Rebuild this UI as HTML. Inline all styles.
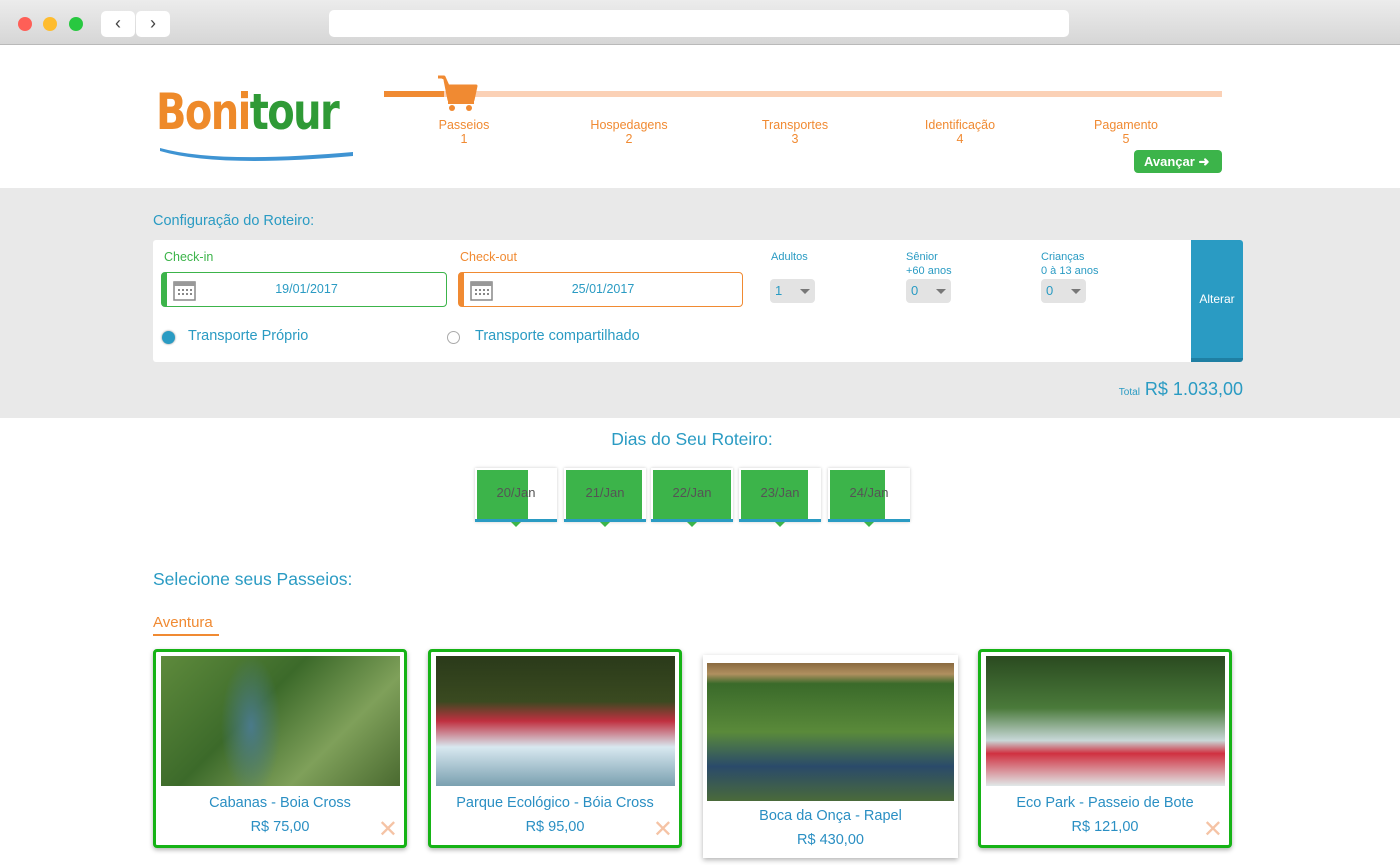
<!DOCTYPE html>
<html><head><meta charset="utf-8"><style>
*{box-sizing:border-box;margin:0;padding:0}
body{width:1400px;height:865px;overflow:hidden;font-family:"Liberation Sans",sans-serif;background:#fff;position:relative;color:#2a9bc3}
.a{position:absolute}
.chrome{left:0;top:0;width:1400px;height:45px;background:linear-gradient(#ececec,#d6d6d6);border-bottom:1px solid #b9b9b9}
.dot{width:14px;height:14px;border-radius:50%;top:17px}
.nb{top:11px;width:34px;height:26px;background:#fff;border-radius:5px;font-size:18px;color:#444;text-align:center;line-height:25px}
.step{width:120px;text-align:center;color:#f08a32;font-size:12.5px;line-height:14px;top:118px}
.gray{left:0;top:188px;width:1400px;height:230px;background:#e9e9e9}
.lbl{font-size:11px;color:#2a9bc3;line-height:14px}
.sel{width:45px;height:24px;background:#e3e3e3;border-radius:4px;font-size:13px;color:#2a9bc3;padding:4px 0 0 5px}
.sel:after{content:"";position:absolute;right:5px;top:10px;border:5px solid transparent;border-top:5px solid #777}
.day{top:468px;width:82px;height:54px;background:#fff;box-shadow:0 0 3px #ccc;border-bottom:3px solid #2a9bc3;font-size:13px;color:#555;text-align:center;line-height:50px}
.day i{position:absolute;left:2px;top:2px;height:49px;background:#3cb44a}
.day span{position:relative}
.day b{position:absolute;left:36px;top:54px;border:5px solid transparent;border-top:5px solid #3cb44a}
.card{top:649px;width:254px;height:199px;border:3px solid #16b316;border-radius:4px;box-shadow:0 2px 5px rgba(0,0,0,.3);background:#fff;text-align:center}
.card .img{position:absolute;left:5px;top:4px;width:239px;height:130px}
.card .t{position:absolute;left:0;width:100%;top:143px;font-size:14.5px;color:#2a8fc3}
.card .p{position:absolute;left:0;width:100%;top:167px;font-size:14.5px;color:#2a8fc3}
.x{position:absolute;right:6px;top:168px;font-size:24px;color:#f5c3a5;line-height:20px}
</style></head><body>
<div class="a chrome"></div>
<div class="a dot" style="left:18px;background:#fe5f57"></div>
<div class="a dot" style="left:43px;background:#febc2e"></div>
<div class="a dot" style="left:69px;background:#28c840"></div>
<div class="a nb" style="left:101px">‹</div>
<div class="a nb" style="left:136px">›</div>
<div class="a" style="left:329px;top:10px;width:740px;height:27px;background:#fff;border-radius:5px"></div>

<div class="a" style="left:156px;top:82px;font-family:'DejaVu Sans',sans-serif;font-size:50px;font-weight:bold;letter-spacing:-2px;line-height:60px;transform:scaleX(0.8);transform-origin:0 0"><span style="color:#ee8a2a">Boni</span><span style="color:#2f9a36">tour</span></div>
<svg class="a" style="left:158px;top:142px" width="196" height="24"><path d="M2 6 Q60 22 195 10 L195 14 Q60 26 2 9Z" fill="#3f94d3"/></svg>

<div class="a" style="left:384px;top:91px;width:838px;height:6px;background:#fbd1b6"></div>
<div class="a" style="left:384px;top:91px;width:60px;height:6px;background:#f08a32"></div>
<svg class="a" style="left:436px;top:74px" width="42" height="38" viewBox="0 0 42 38"><path d="M2 3 L8 3 L12 12 L40 12 L37 26 L13 26 L9 6" fill="#f08a32" stroke="#f08a32" stroke-width="3" stroke-linejoin="round"/><rect x="12" y="27" width="26" height="3" fill="#f08a32"/><circle cx="16" cy="34" r="3" fill="#f08a32"/><circle cx="33" cy="34" r="3" fill="#f08a32"/></svg>
<div class="a step" style="left:404px">Passeios<br>1</div>
<div class="a step" style="left:569px">Hospedagens<br>2</div>
<div class="a step" style="left:735px">Transportes<br>3</div>
<div class="a step" style="left:900px">Identificação<br>4</div>
<div class="a step" style="left:1066px">Pagamento<br>5</div>
<div class="a" style="left:1134px;top:150px;width:88px;height:23px;background:#3cb44a;border-radius:4px;color:#fff;font-weight:bold;font-size:13px;line-height:23px;padding-left:10px">Avançar ➜</div>

<div class="a gray"></div>
<div class="a" style="left:153px;top:213px;font-size:14.5px">Configuração do Roteiro:</div>
<div class="a" style="left:153px;top:240px;width:1090px;height:122px;background:#fff;border-radius:3px"></div>
<div class="a" style="left:164px;top:250px;font-size:12.5px;color:#3cb44a">Check-in</div>
<div class="a" style="left:460px;top:250px;font-size:12.5px;color:#f08a32">Check-out</div>
<div class="a" style="left:161px;top:272px;width:286px;height:35px;border:1px solid #3cb44a;border-left:6px solid #3cb44a;border-radius:4px;font-size:12.5px;text-align:center;line-height:33px">19/01/2017</div>
<div class="a" style="left:458px;top:272px;width:285px;height:35px;border:1px solid #f08a32;border-left:6px solid #f08a32;border-radius:4px;font-size:12.5px;text-align:center;line-height:33px">25/01/2017</div>
<svg class="a" style="left:173px;top:279px" width="24" height="22"><rect x="1" y="3" width="21" height="18" fill="#fff" stroke="#888" stroke-width="1.5"/><rect x="1" y="3" width="21" height="4" fill="#999"/><g fill="#888"><rect x="5" y="10" width="2" height="2"/><rect x="9" y="10" width="2" height="2"/><rect x="13" y="10" width="2" height="2"/><rect x="17" y="10" width="2" height="2"/><rect x="5" y="14" width="2" height="2"/><rect x="9" y="14" width="2" height="2"/><rect x="13" y="14" width="2" height="2"/><rect x="17" y="14" width="2" height="2"/></g></svg>
<svg class="a" style="left:470px;top:279px" width="24" height="22"><rect x="1" y="3" width="21" height="18" fill="#fff" stroke="#888" stroke-width="1.5"/><rect x="1" y="3" width="21" height="4" fill="#999"/><g fill="#888"><rect x="5" y="10" width="2" height="2"/><rect x="9" y="10" width="2" height="2"/><rect x="13" y="10" width="2" height="2"/><rect x="17" y="10" width="2" height="2"/><rect x="5" y="14" width="2" height="2"/><rect x="9" y="14" width="2" height="2"/><rect x="13" y="14" width="2" height="2"/><rect x="17" y="14" width="2" height="2"/></g></svg>
<div class="a" style="left:162px;top:331px;width:13px;height:13px;border-radius:50%;background:#2a9bc3;box-shadow:0 0 2px #888"></div>
<div class="a" style="left:188px;top:328px;font-size:14.5px">Transporte Próprio</div>
<div class="a" style="left:447px;top:331px;width:13px;height:13px;border-radius:50%;border:1px solid #aaa"></div>
<div class="a" style="left:475px;top:328px;font-size:14.5px">Transporte compartilhado</div>
<div class="a lbl" style="left:771px;top:250px">Adultos</div>
<div class="a lbl" style="left:906px;top:250px">Sênior<br>+60 anos</div>
<div class="a lbl" style="left:1041px;top:250px">Crianças<br>0 à 13 anos</div>
<div class="a sel" style="left:770px;top:279px">1</div>
<div class="a sel" style="left:906px;top:279px">0</div>
<div class="a sel" style="left:1041px;top:279px">0</div>
<div class="a" style="left:1191px;top:240px;width:52px;height:122px;background:#2a9bc3;border-bottom:4px solid #1f7fa3;border-radius:0 3px 3px 0;color:#fff;font-size:12px;text-align:center;line-height:118px">Alterar</div>
<div class="a" style="left:1050px;top:379px;width:193px;text-align:right;font-size:18px"><span style="font-size:10px">Total</span> R$ 1.033,00</div>

<div class="a" style="left:0;top:429px;width:1384px;text-align:center;font-size:17.5px">Dias do Seu Roteiro:</div>
<div class="a day" style="left:475px"><i style="width:51px"></i><span>20/Jan</span><b></b></div>
<div class="a day" style="left:564px"><i style="width:76px"></i><span>21/Jan</span><b></b></div>
<div class="a day" style="left:651px"><i style="width:78px"></i><span>22/Jan</span><b></b></div>
<div class="a day" style="left:739px"><i style="width:67px"></i><span>23/Jan</span><b></b></div>
<div class="a day" style="left:828px"><i style="width:55px"></i><span>24/Jan</span><b></b></div>

<div class="a" style="left:153px;top:569px;font-size:17.5px">Selecione seus Passeios:</div>
<div class="a" style="left:153px;top:614px;font-size:15px;color:#f08a32;border-bottom:2px solid #f08a32;padding-bottom:3px;width:66px">Aventura</div>

<div class="a card" style="left:153px"><div class="img" style="background:radial-gradient(ellipse 30px 70px at 90px 70px,#4a7a8a,transparent),linear-gradient(135deg,#5e8a3c,#3c6a2a 40%,#7fa05a 70%,#4a6a30)"></div><div class="t">Cabanas - Boia Cross</div><div class="p">R$ 75,00</div><div class="x">✕</div></div>
<div class="a card" style="left:428px"><div class="img" style="background:linear-gradient(#2a3a1a 0%,#3a4a20 35%,#c03040 50%,#d8e8f0 70%,#7aa0b0 100%)"></div><div class="t">Parque Ecológico - Bóia Cross</div><div class="p">R$ 95,00</div><div class="x">✕</div></div>
<div class="a card" style="left:703px;top:655px;width:255px;height:203px;border:none;border-radius:0"><div class="img" style="left:4px;top:8px;width:247px;height:138px;background:linear-gradient(#8a6a40 0%,#b09060 8%,#3a6a2a 15%,#5a8a3a 50%,#2a4a6a 75%,#4a6a3a 100%)"></div><div class="t" style="top:153px">Boca da Onça - Rapel</div><div class="p" style="top:177px">R$ 430,00</div></div>
<div class="a card" style="left:978px"><div class="img" style="background:linear-gradient(#2a4a20 0%,#4a7a3a 40%,#c8d8d8 65%,#d03040 75%,#e0e8e8 100%)"></div><div class="t">Eco Park - Passeio de Bote</div><div class="p">R$ 121,00</div><div class="x">✕</div></div>
</body></html>
